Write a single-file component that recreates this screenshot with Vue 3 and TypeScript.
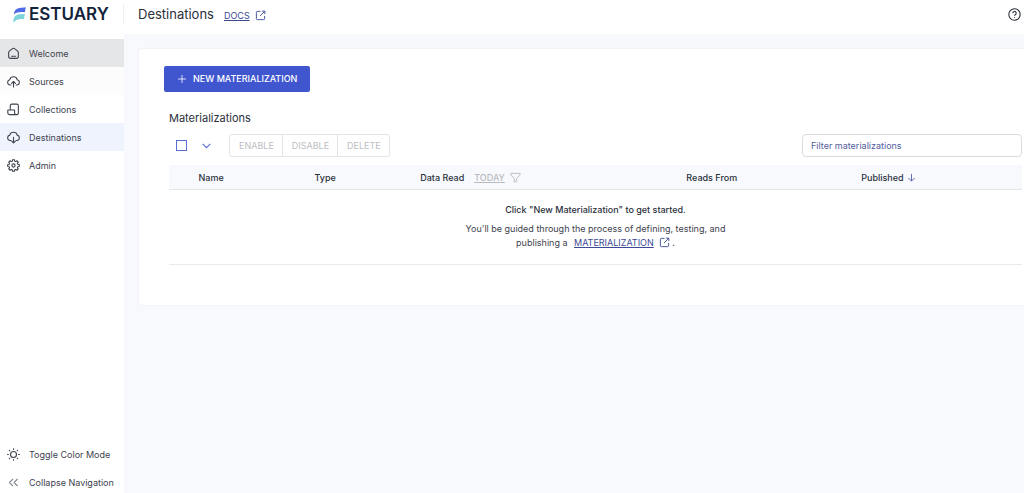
<script setup lang="ts">
import { ref } from 'vue'

interface NavItem {
  label: string
  icon: string
  state?: 'hovered' | 'tinted' | 'active'
}

const navItems: NavItem[] = [
  { label: 'Welcome', icon: 'home', state: 'hovered' },
  { label: 'Sources', icon: 'upload', state: 'tinted' },
  { label: 'Collections', icon: 'scroll' },
  { label: 'Destinations', icon: 'download', state: 'active' },
  { label: 'Admin', icon: 'gear' },
]

const bulkActions = ['Enable', 'Disable', 'Delete']
const filter = ref('')
const allSelected = ref(false)

const gearPath = (() => {
  const points: string[] = []
  const teeth = 8
  for (let i = 0; i < teeth; i++) {
    const base = (i * 2 * Math.PI) / teeth
    for (const [offset, radius] of [[-0.28, 8.2], [-0.16, 10.8], [0.16, 10.8], [0.28, 8.2]]) {
      const x = 12 + radius * Math.sin(base + offset)
      const y = 12 - radius * Math.cos(base + offset)
      points.push(`${x.toFixed(2)} ${y.toFixed(2)}`)
    }
  }
  return `M${points.join('L')}Z`
})()
</script>

<template>
  <div class="app">
    <header class="topbar">
      <a class="brand" href="#" aria-label="Estuary">
        <svg class="brand-mark" viewBox="0 0 13 16" aria-hidden="true">
          <path d="M.8 7.600C1.100 3.500 3 1.300 6.300.9L12.800.3 11.900 5.300C7.500 4.700 3.800 5 .8 7.600Z" fill="#4f6be8" />
          <path d="M.3 15.700C.2 10.500 2.200 7.600 6.500 7.300L11.900 7.100 10.900 12.200C6.500 11.800 2.800 12.600.3 15.700Z" fill="#7dd5da" />
        </svg>
        <span class="brand-name">ESTUARY</span>
      </a>
      <h1 class="page-title">Destinations</h1>
      <a class="link docs" href="#">DOCS
        <svg class="icon-external" viewBox="0 0 24 24" aria-hidden="true"><path d="M12 3H5a2 2 0 0 0-2 2v14a2 2 0 0 0 2 2h14a2 2 0 0 0 2-2v-6M15 2.500h6.500V9M21 3 11 13" /></svg>
      </a>
      <button class="help" type="button" aria-label="Help">
        <svg viewBox="0 0 24 24" aria-hidden="true"><circle cx="12" cy="12" r="10.500" /><path d="M8.800 9.500a3.200 3.200 0 1 1 4.700 2.800c-1 .6-1.500 1-1.500 2.200M12 17v1.500" /></svg>
      </button>
    </header>

    <div class="body">
      <nav class="sidebar" aria-label="Main">
        <a v-for="item in navItems" :key="item.label" href="#" class="nav-item" :class="item.state">
          <svg class="nav-icon" viewBox="0 0 24 24" aria-hidden="true">
            <path v-if="item.icon === 'home'" d="M3 10.500C3 9 3.700 8 4.800 7.100L9.500 3.400a4 4 0 0 1 5 0l4.700 3.700C20.300 8 21 9 21 10.500V17a4 4 0 0 1-4 4H7a4 4 0 0 1-4-4ZM8.500 17h7" />
            <path v-else-if="item.icon === 'upload'" d="M7 18.500H6a5 5 0 0 1-.8-9.900 7 7 0 0 1 13.600 0A5 5 0 0 1 18 18.500h-1M12 22V12M8.500 15.500 12 12l3.500 3.500" />
            <path v-else-if="item.icon === 'download'" d="M7 17.500H6a5 5 0 0 1-.8-9.900 7 7 0 0 1 13.600 0A5 5 0 0 1 18 17.500h-1M12 11.500V22M8.500 18.500 12 22l3.500-3.500" />
            <path v-else-if="item.icon === 'scroll'" d="M6 13V5a3 3 0 0 1 3-3h9a3 3 0 0 1 3 3v13.500a3 3 0 0 1-3 3H5a3.500 3.500 0 0 1-3.500-3.500v-5H14V18a3.500 3.500 0 0 0 3.500 3.500" />
            <template v-else>
              <path :d="gearPath" />
              <circle cx="12" cy="12" r="3" />
            </template>
          </svg>
          <span>{{ item.label }}</span>
        </a>
        <div class="sidebar-footer">
          <button class="nav-item" type="button">
            <svg class="nav-icon" viewBox="0 0 24 24" aria-hidden="true">
              <circle cx="12" cy="12" r="5.500" />
              <path d="M12 1.500v1M12 21.500v1M1 12h1.500M21.500 12H23M4.300 4.300l.8.8M18.900 18.900l.8.8M4.300 19.700l.8-.8M18.900 5.100l.8-.8" />
            </svg>
            <span>Toggle Color Mode</span>
          </button>
          <button class="nav-item" type="button">
            <svg class="nav-icon thin" viewBox="0 0 24 24" aria-hidden="true"><path d="M10.500 6 4.500 12l6 6M19 6l-6 6 6 6" /></svg>
            <span>Collapse Navigation</span>
          </button>
        </div>
      </nav>

      <main class="content">
        <section class="card">
          <button class="primary" type="button">
            <svg viewBox="0 0 10 10" aria-hidden="true"><path d="M5 0v10M0 5h10" /></svg>
            NEW MATERIALIZATION
          </button>

          <div class="panel">
            <h2 class="panel-title">Materializations</h2>
            <div class="toolbar">
              <input v-model="allSelected" class="select-all" type="checkbox" aria-label="Select all" />
              <button class="select-menu" type="button" aria-label="Selection options">
                <svg viewBox="0 0 10 10" aria-hidden="true"><path d="M1.500 3.500 5 7l3.500-3.500" /></svg>
              </button>
              <div class="button-group">
                <button v-for="action in bulkActions" :key="action" type="button" disabled>{{ action.toUpperCase() }}</button>
              </div>
              <input v-model="filter" class="filter" type="text" placeholder="Filter materializations" aria-label="Filter materializations" />
            </div>

            <table class="grid">
              <colgroup>
                <col class="col-select" /><col class="col-name" /><col class="col-type" />
                <col class="col-data" /><col class="col-reads" /><col class="col-published" />
              </colgroup>
              <thead>
                <tr>
                  <th aria-label="Select"></th>
                  <th scope="col">Name</th>
                  <th scope="col">Type</th>
                  <th scope="col">
                    <div class="head-cell">
                      Data Read
                      <button class="range" type="button" disabled>
                        <span>TODAY</span>
                        <svg viewBox="0 0 12 12" aria-hidden="true"><path d="M1 1.500h10v1.800L7.300 7v3L4.700 11V7L1 3.300Z" /></svg>
                      </button>
                    </div>
                  </th>
                  <th scope="col">Reads From</th>
                  <th scope="col" aria-sort="descending">
                    <div class="head-cell sorted">
                      Published
                      <svg viewBox="0 0 10 10" aria-hidden="true"><path d="M5 1v8M1.500 5.500 5 9l3.500-3.500" /></svg>
                    </div>
                  </th>
                </tr>
              </thead>
              <tbody>
                <tr>
                  <td colspan="6">
                    <p class="empty-title">Click "New Materialization" to get started.</p>
                    <p class="empty-text">
                      You'll be guided through the process of defining, testing, and publishing a
                      <a class="link inline" href="#">MATERIALIZATION<svg class="icon-external" viewBox="0 0 24 24" aria-hidden="true"><path d="M12 3H5a2 2 0 0 0-2 2v14a2 2 0 0 0 2 2h14a2 2 0 0 0 2-2v-6M15 2.500h6.500V9M21 3 11 13" /></svg></a>
                      .
                    </p>
                  </td>
                </tr>
              </tbody>
            </table>
          </div>
        </section>
      </main>
    </div>
  </div>
</template>

<style>
body {
  margin: 0;
}
</style>

<style scoped>
.app {
  display: flex;
  flex-direction: column;
  min-height: 100vh;
  background: #f7f9fd;
  color: #2b303b;
  font-family: Inter, "Liberation Sans", sans-serif;
  font-size: 9px;
  line-height: 14px;
}

.app * {
  box-sizing: border-box;
}

button,
input {
  font: inherit;
  color: inherit;
}

button {
  border: 0;
  padding: 0;
  background: none;
}

svg {
  display: block;
  flex: none;
  fill: none;
  stroke: currentColor;
}

.topbar {
  display: flex;
  align-items: center;
  height: 34px;
  padding: 0 3px 6px 0;
  background: #fff;
}

.brand {
  display: flex;
  align-items: center;
  gap: 3px;
  width: 124px;
  height: 20px;
  padding-left: 13px;
  border-right: 1px solid #eeeff1;
  color: #13233b;
  text-decoration: none;
}

.brand-mark {
  width: 13px;
  height: 16px;
  margin-top: 2px;
  stroke: none;
}

.brand-name {
  font-size: 17px;
  font-weight: 600;
  line-height: 20px;
}

.page-title {
  margin: 0 10px 0 14px;
  font-size: 13px;
  font-weight: 400;
  line-height: 20px;
}

.link {
  color: #3c4a96;
  text-underline-offset: 1px;
}

.docs {
  display: flex;
  align-items: center;
  gap: 5px;
  padding-top: 3px;
}

.icon-external {
  width: 11px;
  height: 11px;
  stroke-width: 2;
}

.help {
  margin-left: auto;
}

.help svg {
  width: 13px;
  height: 13px;
  stroke-width: 2;
}

.body {
  display: flex;
  flex: 1;
}

.sidebar {
  display: flex;
  flex-direction: column;
  flex: none;
  width: 124px;
  padding-top: 5px;
  background: #fff;
}

.nav-item {
  display: flex;
  align-items: center;
  gap: 9px;
  height: 28px;
  padding: 1px 0 0 7px;
  color: #3d424d;
  text-decoration: none;
}

.hovered {
  background: #e5e6e8;
}

.tinted {
  background: #fcfcfc;
}

.active {
  background: #eff3fd;
}

.nav-icon {
  width: 13px;
  height: 13px;
  stroke-width: 2;
  stroke-linecap: round;
  stroke-linejoin: round;
}

.thin {
  stroke-width: 2;
  color: #858991;
}

.sidebar-footer {
  display: flex;
  flex-direction: column;
  gap: 6px;
  margin-top: auto;
}

.sidebar-footer .nav-item {
  height: 22px;
}

.content {
  flex: 1;
  min-width: 0;
  padding: 15px 0 15px 15px;
}

.card {
  padding: 17px 2px 40px 25px;
  border-radius: 3px 0 0 3px;
  background: #fff;
  box-shadow: 0 0 2px #e3e6ec;
}

.primary {
  display: flex;
  align-items: center;
  gap: 7px;
  height: 26px;
  padding: 0 13px 0 14px;
  border-radius: 2px;
  background: #4056cf;
  color: #fff;
  font-weight: 500;
}

.primary svg {
  width: 8px;
  height: 8px;
}

.panel {
  padding: 18px 0 0 5px;
}

.panel-title {
  margin: 0;
  font-size: 11px;
  font-weight: 400;
  line-height: 16px;
}

.toolbar {
  display: flex;
  align-items: center;
  margin: 8px 0;
  padding-left: 7px;
}

.select-all {
  appearance: none;
  width: 11px;
  height: 11px;
  margin: 0 14px 0 0;
  border: 1px solid #5a6dd5;
}

.select-all:checked {
  background: #5a6dd5;
}

.select-menu {
  margin-right: 17px;
  color: #5a6dd5;
}

.select-menu svg {
  width: 11px;
  height: 11px;
}

.button-group {
  display: flex;
  border: 1px solid #e3e4e6;
  border-radius: 3px;
}

.button-group button {
  height: 21px;
  padding: 0 8px 0 9px;
  color: #bcbec3;
}

.button-group button + button {
  border-left: 1px solid #e3e4e6;
}

.filter {
  width: 220px;
  height: 23px;
  margin-left: auto;
  padding: 0 8px;
  border: 1px solid #d9dbdf;
  border-radius: 4px;
  background: #fff;
}

.filter::placeholder {
  color: #525c9c;
  opacity: 1;
}

.grid {
  width: 100%;
  table-layout: fixed;
  border-collapse: collapse;
}

.col-select { width: 2.4%; }
.col-name { width: 13.6%; }
.col-type { width: 12.4%; }
.col-data { width: 31.2%; }
.col-reads { width: 20.5%; }
.col-published { width: 19.9%; }

.grid th {
  height: 24px;
  padding: 2px 9px 0;
  border-bottom: 1px solid #e4e7ea;
  background: #f7f9fd;
  font-weight: 500;
  text-align: left;
}

.head-cell {
  display: flex;
  align-items: center;
  gap: 10px;
}

.range {
  display: flex;
  align-items: center;
  gap: 5px;
  color: #b9bbc0;
  text-decoration: underline;
}

.range svg {
  width: 11px;
  height: 11px;
}

.sorted {
  gap: 3px;
}

.sorted svg {
  width: 9px;
  height: 9px;
  color: #4f5cae;
}

.grid td {
  padding: 13px 9px 14px;
  border-bottom: 1px solid #e8eaec;
  text-align: center;
}

.empty-title {
  margin: 0 0 5px;
  font-weight: 500;
}

.empty-text {
  width: 272px;
  margin: 0 auto;
  color: #3d424d;
}

.inline {
  margin-left: 4px;
}

.inline .icon-external {
  display: inline-block;
  margin-left: 5px;
  vertical-align: -2px;
}
</style>
